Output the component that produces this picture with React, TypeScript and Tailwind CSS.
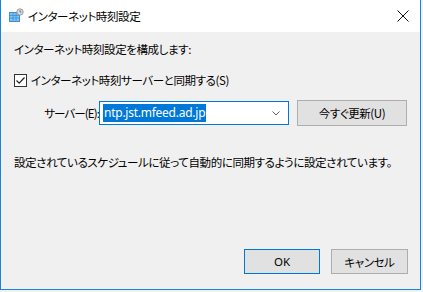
import React from "react";

const JP = "font-['Noto_Sans_CJK_JP','Noto_Sans',sans-serif] [font-feature-settings:'palt']";

function TitleIcon() {
  return (
    <svg width="16" height="16" viewBox="0 0 16 16">
      <rect x="1" y="4" width="11" height="10" fill="#3d8fd6" />
      <rect x="2" y="5" width="9" height="8" fill="#7fc3ef" />
      <path d="M2 7.5h9M2 10h9M5 5v8M8 5v8" stroke="#3d8fd6" strokeWidth="0.8" />
      <circle cx="12" cy="4" r="3.2" fill="#d9d9d9" stroke="#8a8a8a" strokeWidth="0.8" />
      <path d="M12 2.3V4h1.3" stroke="#555" strokeWidth="0.7" fill="none" />
    </svg>
  );
}

export default function App() {
  return (
    <div className={`w-[423px] h-[292px] bg-[#eef0f3] text-[11.5px] leading-[16px] tracking-[-0.4px] text-black whitespace-nowrap ${JP}`}>
      <div className="w-[421px] h-[290px] border-x border-b border-[#1883d7] bg-[#f0f0f0] flex flex-col">
        {/* title bar */}
        <div className="h-[32px] bg-white flex items-center pl-[7px] pr-[10px]">
          <TitleIcon />
          <span className="ml-[4px]">インターネット時刻設定</span>
          <div className="flex-1" />
          <svg width="12" height="12" viewBox="0 0 12 12" className="mr-[1px]">
            <path d="M0.5 0.5L11.5 11.5M11.5 0.5L0.5 11.5" stroke="#111" strokeWidth="1" />
          </svg>
        </div>
        {/* content */}
        <div className="flex-1 flex flex-col pl-[13px] pr-[12px] pb-[15px]">
          <div className="mt-[9px]">インターネット時刻設定を構成します:</div>
          <div className="mt-[15px] flex items-center">
            <div className="w-[13px] h-[13px] border border-[#333] bg-white flex items-center justify-center">
              <svg width="11" height="11" viewBox="0 0 11 11">
                <path d="M1.5 5.5L4.2 8.2L9.5 2.5" stroke="#222" strokeWidth="1.2" fill="none" />
              </svg>
            </div>
            <span className="ml-[4px]">インターネット時刻サーバーと同期する(S)</span>
          </div>
          <div className="mt-[12px] flex items-center">
            <div className="w-[85px] shrink-0 flex justify-end">
              <span className="tracking-[-0.9px]">サーバー(E):</span>
            </div>
            <div className="w-[190px] h-[24px] border border-[#0078d7] bg-white flex items-center pl-[3px] pr-[8px]">
              <span className="bg-[#0078d7] text-white h-[18px] px-[1px] flex items-center font-['Noto_Sans',sans-serif] text-[12px] tracking-[-0.25px]">
                ntp.jst.mfeed.ad.jp
              </span>
              <div className="flex-1" />
              <svg width="8" height="5" viewBox="0 0 8 5">
                <path d="M0.5 0.5L4 4L7.5 0.5" stroke="#606060" strokeWidth="1" fill="none" />
              </svg>
            </div>
            <div className="ml-[8px] w-[110px] h-[26px] border border-[#adadad] bg-[#e1e1e1] flex items-center justify-center">
              今すぐ更新(U)
            </div>
          </div>
          <div className="mt-[28px]">
            設定されているスケジュールに従って自動的に同期するように設定されています。
          </div>
          <div className="flex-1" />
          <div className="flex justify-end gap-[11px]">
            <div className="w-[76px] h-[25px] border border-[#0078d7] bg-[#e1e1e1] flex items-center justify-center font-['Noto_Sans',sans-serif] tracking-normal">
              OK
            </div>
            <div className="w-[77px] h-[25px] border border-[#adadad] bg-[#e1e1e1] flex items-center justify-center">
              キャンセル
            </div>
          </div>
        </div>
      </div>
    </div>
  );
}
